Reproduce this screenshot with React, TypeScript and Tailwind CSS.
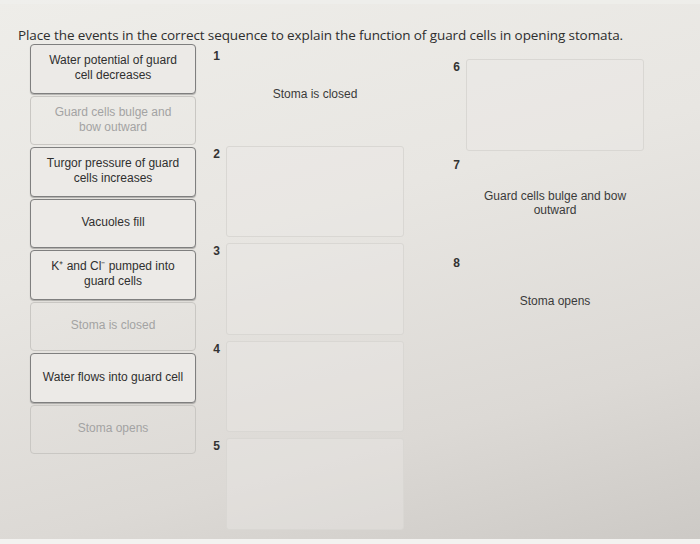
import React from 'react';

type Card = { label: string; used?: boolean; nowrap?: boolean };

const cards: Card[] = [
  { label: 'Water potential of guard cell decreases' },
  { label: 'Guard cells bulge and bow outward', used: true },
  { label: 'Turgor pressure of guard cells increases' },
  { label: 'Vacuoles fill' },
  { label: 'K⁺ and Cl⁻ pumped into guard cells' },
  { label: 'Stoma is closed', used: true },
  { label: 'Water flows into guard cell', nowrap: true },
  { label: 'Stoma opens', used: true },
];

// what has been dropped into each numbered slot so far
const placed: Record<number, string> = {
  1: 'Stoma is closed',
  7: 'Guard cells bulge and bow outward',
  8: 'Stoma opens',
};

function Slot({ n, pitch }: { n: number; pitch: string }) {
  const filled = placed[n];
  return (
    <div className={`flex ${pitch}`}>
      <span className="w-[12px] pt-[1px] text-right text-[12px] font-bold leading-[14px] text-[#333]">{n}</span>
      <div
        className={`ml-[6px] flex w-[178px] items-center justify-center rounded-[3px] px-[12px] text-center text-[12px] leading-[14px] text-[#3a3a3a] ${
          filled ? 'border border-transparent' : 'border border-[#d9d7d3] bg-[#ebe9e6]/40'
        }`}
      >
        {filled}
      </div>
    </div>
  );
}

export default function App() {
  return (
    <div className="flex h-[544px] w-[700px] flex-col overflow-hidden bg-[linear-gradient(165deg,#eeede9_0%,#e8e6e2_40%,#dcd9d5_75%,#ccc9c5_100%)] font-['Liberation_Sans',Arial,sans-serif]">
      <div className="h-[4px] bg-[#f0efed]/70" />
      <div className="pl-[18px] pt-[23px]">
        <p className="font-['Open_Sans',sans-serif] text-[13.5px] leading-[16px] tracking-[-0.1px] text-[#2e2e2e]">
          Place the events in the correct sequence to explain the function of guard cells in opening stomata.
        </p>

        <div className="mt-[1px] flex">
          {/* draggable events */}
          <div className="ml-[12px] flex w-[166px] flex-col gap-[2px]">
            {cards.map((c, i) => (
              <div
                key={i}
                className={`flex h-[49.5px] items-center justify-center rounded-[4px] px-[14px] pb-[1px] text-center text-[12px] leading-[15px] ${
                  c.nowrap ? 'whitespace-nowrap' : ''
                } ${
                  c.used
                    ? 'border border-[#c9c7c3] text-[#a3a3a3]'
                    : 'border border-[#7f7f7f] bg-[#eceae7] text-[#2f2f2f] shadow-[0_1px_1px_rgba(0,0,0,0.25)]'
                }`}
              >
                <span>{c.label}</span>
              </div>
            ))}
          </div>

          {/* slots 1-5 */}
          <div className="ml-[12px] mt-[4px] flex flex-col gap-[6px]">
            {[1, 2, 3, 4, 5].map((n) => (
              <Slot key={n} n={n} pitch="h-[91.5px]" />
            ))}
          </div>

          {/* slots 6-8 */}
          <div className="ml-[44px] mt-[15px] flex flex-col gap-[6px]">
            {[6, 7, 8].map((n) => (
              <Slot key={n} n={n} pitch="h-[92px]" />
            ))}
          </div>
        </div>
      </div>
      <div className="mt-auto h-[5px] bg-[#f3f2f0]" />
    </div>
  );
}
